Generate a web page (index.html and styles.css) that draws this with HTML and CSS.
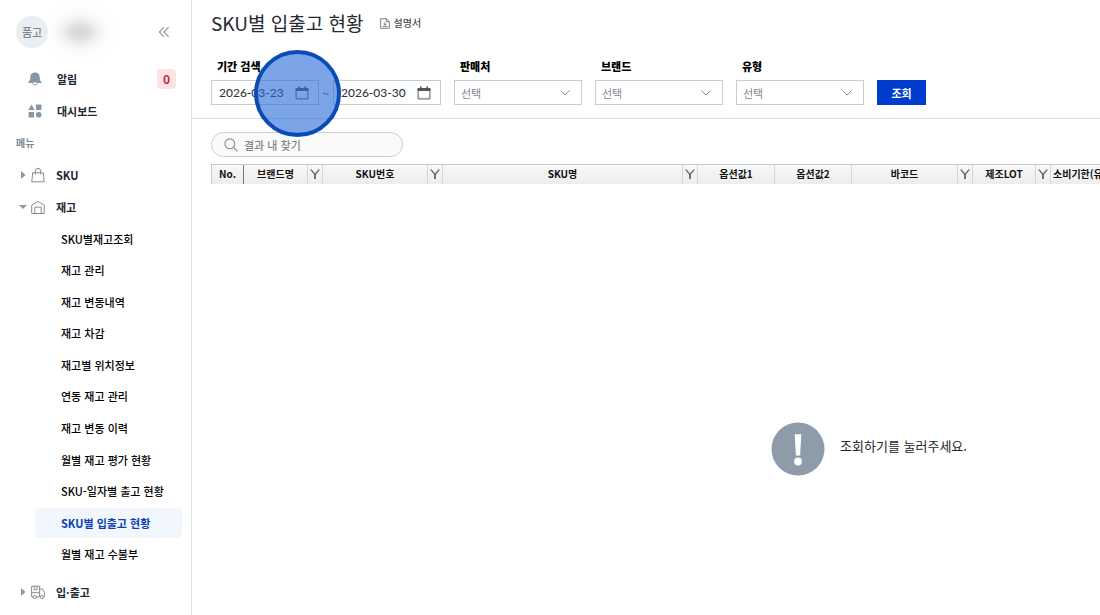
FILE: index.html
```html
<!DOCTYPE html>
<html lang="ko">
<head>
<meta charset="utf-8">
<title>SKU별 입출고 현황</title>
<link rel="stylesheet" href="styles.css">
</head>
<body>
<div class="app">
  <nav class="sidebar">
    <div class="account">
      <span class="avatar">품고</span>
      <span class="account-name"></span>
      <button class="collapse" type="button" aria-label="메뉴 접기">
        <svg width="12" height="12" viewBox="0 0 12 12" fill="none" stroke="#8b95a0" stroke-width="1.1"><path d="M6 1.2 1.3 6 6 10.8M10.6 1.2 5.9 6l4.7 4.8"/></svg>
      </button>
    </div>
    <a class="quick" href="#">
      <svg width="14" height="14" viewBox="0 0 14 14" fill="#8796a5"><path d="M7 .5C4 .5 2.300 2.600 2.300 5.200c0 2.700-.6 3.900-1.900 4.800v.9h13.200V10c-1.300-.9-1.900-2.100-1.900-4.800C11.700 2.600 10 .5 7 .5z"/><path d="M4.700 10.500a2.300 2.600 0 0 0 4.600 0" fill="#fff" stroke="#8796a5" stroke-width=".9"/></svg>
      <span>알림</span>
      <span class="count">0</span>
    </a>
    <a class="quick" href="#">
      <svg width="14" height="14" viewBox="0 0 14 14" fill="#8796a5"><path d="M3.500.6 6.700 6H.3z"/><path d="M8 .6h5.400V6H8zM.6 8H6v5.400H.6z"/><circle cx="10.700" cy="10.700" r="2.800"/></svg>
      <span>대시보드</span>
    </a>
    <p class="section">메뉴</p>
    <a class="group" href="#">
      <svg class="arrow" width="8" height="8" viewBox="0 0 8 8"><path d="M2 0v8l4.500-4z"/></svg>
      <svg class="group-icon" width="14" height="16" viewBox="0 0 14 16"><path d="M1.700 5.800h10.600l.9 9H.8zM4.300 7.500V4a2.700 2.700 0 0 1 5.400 0v3.500"/></svg>
      <span>SKU</span>
    </a>
    <a class="group" href="#">
      <svg class="arrow" width="8" height="8" viewBox="0 0 8 8"><path d="M0 2h8L4 6z"/></svg>
      <svg class="group-icon" width="14" height="16" viewBox="0 0 14 16"><path d="M.7 6.200 7 2.500l6.300 3.700v8.300H.7zM3.800 14.500V8.200h6.400v6.300"/></svg>
      <span>재고</span>
    </a>
    <ul class="submenu">
      <li><a href="#">SKU별재고조회</a></li>
      <li><a href="#">재고 관리</a></li>
      <li><a href="#">재고 변동내역</a></li>
      <li><a href="#">재고 차감</a></li>
      <li><a href="#">재고별 위치정보</a></li>
      <li><a href="#">연동 재고 관리</a></li>
      <li><a href="#">재고 변동 이력</a></li>
      <li><a href="#">월별 재고 평가 현황</a></li>
      <li><a href="#">SKU-일자별 출고 현황</a></li>
      <li><a class="active" href="#" aria-current="page">SKU별 입출고 현황</a></li>
      <li><a href="#">월별 재고 수불부</a></li>
    </ul>
    <a class="group last" href="#">
      <svg class="arrow" width="8" height="8" viewBox="0 0 8 8"><path d="M2 0v8l4.500-4z"/></svg>
      <svg class="group-icon" width="14" height="16" viewBox="0 0 14 16"><path d="M2.300 12.800H.6V2.200h8v10.600H5.300M3.200 2.200v3.600h2.800V2.200M8.600 5h2.800l2 3.300v4.500h-1.100M8.600 8.700H.6"/><circle cx="3.800" cy="13" r="1.600"/><circle cx="10.800" cy="13" r="1.600"/></svg>
      <span>입·출고</span>
    </a>
  </nav>

  <main class="main">
    <header class="heading">
      <h1>SKU별 입출고 현황</h1>
      <a class="guide" href="#">
        <svg width="10" height="11" viewBox="0 0 10 11" fill="none" stroke="#6b7176" stroke-width=".9"><path d="M.6.700h5.800l2.900 2.800v6.800H.6zM6.200.7v3h3M2.600 8.400h4.800M4.900 4.300v2.700M3.500 5.900l1.400 1.200 1.400-1.200"/></svg>
        설명서
      </a>
    </header>

    <form class="filters">
      <div class="field">
        <label for="from">기간 검색</label>
        <div class="range">
          <span class="control date">
            <input id="from" type="text" value="2026-03-23">
            <svg width="14" height="14" viewBox="0 0 14 14"><path class="cal" d="M1.100 2.600h11.800v10.300H1.100z"/><path class="cal-top" d="M.6 2.200h12.800v2.900H.6zM3 .5h1.600v2H3zM9.400.5H11v2H9.400z"/></svg>
          </span>
          <span class="tilde">~</span>
          <span class="control date">
            <input type="text" value="2026-03-30" aria-label="종료일">
            <svg width="14" height="14" viewBox="0 0 14 14"><path class="cal" d="M1.100 2.600h11.800v10.300H1.100z"/><path class="cal-top" d="M.6 2.200h12.800v2.900H.6zM3 .5h1.600v2H3zM9.400.5H11v2H9.400z"/></svg>
          </span>
          <span class="pointer"></span>
        </div>
      </div>
      <div class="field">
        <label for="seller">판매처</label>
        <span class="control pick">
          <select id="seller"><option>선택</option></select>
          <svg width="10" height="6" viewBox="0 0 10 6"><path d="m.5.5 4.500 4.500L9.500.5"/></svg>
        </span>
      </div>
      <div class="field">
        <label for="brand">브랜드</label>
        <span class="control pick">
          <select id="brand"><option>선택</option></select>
          <svg width="10" height="6" viewBox="0 0 10 6"><path d="m.5.5 4.500 4.500L9.500.5"/></svg>
        </span>
      </div>
      <div class="field">
        <label for="kind">유형</label>
        <span class="control pick">
          <select id="kind"><option>선택</option></select>
          <svg width="10" height="6" viewBox="0 0 10 6"><path d="m.5.5 4.500 4.500L9.500.5"/></svg>
        </span>
      </div>
      <button class="submit" type="button">조회</button>
    </form>

    <section class="results">
      <div class="search">
        <svg width="14" height="14" viewBox="0 0 14 14" fill="none" stroke="#858e96" stroke-width="1.100"><circle cx="5.800" cy="5.800" r="4.900"/><path d="m9.400 9.400 4 4"/></svg>
        <input type="text" placeholder="결과 내 찾기" aria-label="결과 내 찾기">
      </div>
      <table class="grid">
        <colgroup>
          <col class="c-no"><col class="c-brand"><col class="c-filter"><col class="c-code"><col class="c-filter"><col class="c-name"><col class="c-filter"><col class="c-opt"><col class="c-opt"><col class="c-barcode"><col class="c-filter"><col class="c-lot"><col class="c-filter"><col class="c-expiry">
        </colgroup>
        <thead>
          <tr>
            <th class="fixed">No.</th>
            <th>브랜드명</th>
            <th><button type="button" aria-label="브랜드명 필터"><svg width="10" height="10" viewBox="0 0 10 10"><path d="M0 .5h1.600L5 4.600 8.400.5H10L5.900 5.400V10H4.100V5.400z"/></svg></button></th>
            <th>SKU번호</th>
            <th><button type="button" aria-label="SKU번호 필터"><svg width="10" height="10" viewBox="0 0 10 10"><path d="M0 .5h1.600L5 4.600 8.400.5H10L5.900 5.400V10H4.100V5.400z"/></svg></button></th>
            <th>SKU명</th>
            <th><button type="button" aria-label="SKU명 필터"><svg width="10" height="10" viewBox="0 0 10 10"><path d="M0 .5h1.600L5 4.600 8.400.5H10L5.900 5.400V10H4.100V5.400z"/></svg></button></th>
            <th>옵션값1</th>
            <th>옵션값2</th>
            <th>바코드</th>
            <th><button type="button" aria-label="바코드 필터"><svg width="10" height="10" viewBox="0 0 10 10"><path d="M0 .5h1.600L5 4.600 8.400.5H10L5.900 5.400V10H4.100V5.400z"/></svg></button></th>
            <th>제조LOT</th>
            <th><button type="button" aria-label="제조LOT 필터"><svg width="10" height="10" viewBox="0 0 10 10"><path d="M0 .5h1.600L5 4.600 8.400.5H10L5.900 5.400V10H4.100V5.400z"/></svg></button></th>
            <th class="start">소비기한(유</th>
          </tr>
        </thead>
      </table>
      <div class="empty">
        <svg width="54" height="54" viewBox="0 0 54 54"><circle cx="27" cy="27" r="26.500" fill="#8e9ba8"/><path d="M23.700 12.200h6.600l-1.200 21.400h-4.200z" fill="#fff"/><circle cx="27" cy="39.500" r="3.900" fill="#fff"/></svg>
        <p>조회하기를 눌러주세요.</p>
      </div>
    </section>
  </main>
</div>
</body>
</html>
```
FILE: styles.css
```css
* { box-sizing: border-box; }

body {
  margin: 0;
  overflow: hidden;
  background: #fff;
  color: #22272b;
  font-family: "Noto Sans CJK KR", "Noto Sans", sans-serif;
  font-size: 11px;
  line-height: 16px;
}

a { color: inherit; text-decoration: none; }
button, input, select { font: inherit; color: inherit; }
button { padding: 0; border: 0; background: none; }
svg { flex: none; }
p, h1, ul { margin: 0; padding: 0; }

.app {
  display: grid;
  grid-template-columns: 192px minmax(0, 1fr);
  height: 100vh;
}

/* Sidebar */
.sidebar {
  padding: 16px 0 0;
  border-right: 1px solid #dfe2e5;
  overflow: hidden;
}

.account {
  display: flex;
  align-items: center;
  padding: 0 21px 0 16px;
  margin-bottom: 15px;
}

.avatar {
  width: 32px;
  line-height: 32px;
  border-radius: 50%;
  background: #e9eef2;
  color: #7c8791;
  font-weight: 500;
  text-align: center;
}

.account-name {
  width: 36px;
  height: 20px;
  margin-left: 14px;
  border-radius: 50%;
  background: #ccc;
  filter: blur(8px);
}

.collapse { display: flex; margin-left: auto; }

.quick, .group {
  display: flex;
  align-items: center;
  height: 32px;
  font-weight: 700;
}

.quick { gap: 15px; padding: 0 15px 0 28px; }

.count {
  width: 19px;
  margin-left: auto;
  border-radius: 4px;
  background: #fbe3e3;
  color: #b82a42;
  font-size: 12px;
  line-height: 20px;
  text-align: center;
}

.section {
  padding-left: 16px;
  color: #7c8893;
  font-size: 10px;
  font-weight: 700;
  line-height: 32px;
}

.group { padding-left: 19px; }
.arrow { margin-right: 4px; fill: #8e959b; }
.group-icon { margin-right: 11px; fill: none; stroke: #858d94; }

.submenu {
  display: grid;
  grid-auto-rows: 1fr;
  align-items: center;
  min-height: 347px;
  padding: 0 9px 0 35px;
  list-style: none;
}

.submenu a {
  display: block;
  padding-left: 26px;
  border-radius: 4px;
  color: #000;
  font-weight: 500;
  line-height: 30px;
}

.submenu .active { background: #f2f7fd; color: #0b3fb5; font-weight: 700; }
.last { margin-top: 6px; }

/* Page heading and filters */
.main { display: flex; flex-direction: column; min-width: 0; }

.heading {
  display: flex;
  align-items: center;
  gap: 16px;
  padding: 7px 19px 0;
}

h1 { color: #25292d; font-size: 19px; font-weight: 400; line-height: 32px; }

.guide {
  display: flex;
  align-items: center;
  gap: 4px;
  color: #454a50;
  font-size: 10px;
  font-weight: 500;
}

.filters {
  display: flex;
  align-items: flex-end;
  gap: 13px;
  padding: 19px 19px 13px;
  border-bottom: 1px solid #dcdfe1;
}

.field label {
  display: block;
  margin-bottom: 6px;
  padding-left: 6px;
  color: #000;
  font-weight: 900;
}

.range { position: relative; display: flex; align-items: center; }
.tilde { width: 14px; text-align: center; }

.control {
  display: grid;
  grid-template-columns: minmax(0, 1fr);
  align-items: center;
  height: 25px;
  border: 1px solid #c9cdd0;
  background: #fff;
}

.control > * { grid-area: 1 / 1; }
.control svg { justify-self: end; pointer-events: none; }
.control input, .control select {
  width: 100%;
  height: 23px;
  padding: 0 7px;
  border: 0;
  outline: 0;
  background: none;
  appearance: none;
}

.date {
  width: 108px;
  color: #33373a;
  font-family: Lato, "Noto Sans CJK KR", sans-serif;
  font-size: 12px;
  font-weight: 500;
}

.date svg { margin-right: 9px; }
.cal { fill: none; stroke: #555; }
.cal-top { fill: #555; }

.pick { width: 128px; color: #80888f; }
.pick select { padding: 0 6px; }
.pick svg { margin-right: 11px; fill: none; stroke: #858d93; }

.pointer {
  position: absolute;
  top: -30px;
  left: 43px;
  width: 87px;
  height: 87px;
  border: 4px solid #0a4bb8;
  border-radius: 50%;
  background: rgba(37, 104, 217, 0.6);
}

.submit {
  width: 49px;
  height: 25px;
  background: #003cce;
  color: #fff;
  font-weight: 700;
}

/* Results */
.results {
  display: flex;
  flex: 1;
  flex-direction: column;
  padding: 13px 0 0 19px;
  overflow: hidden;
}

.search {
  display: flex;
  align-items: center;
  gap: 6px;
  width: 192px;
  height: 25px;
  padding: 0 12px;
  border: 1px solid #cbcfd1;
  border-radius: 13px;
  background: #fafafa;
}

.search input {
  width: 100%;
  padding: 0;
  border: 0;
  outline: 0;
  background: none;
}

.search input::placeholder { color: #7f878e; font-weight: 500; opacity: 1; }

.grid {
  width: 970px;
  margin-top: 7px;
  border-collapse: separate;
  border-spacing: 0;
  border-top: 1px solid #c6c8ca;
  border-left: 1px solid #c6c8ca;
  table-layout: fixed;
}

.grid th {
  padding: 0 0 1px;
  border-right: 1px solid #d5d7d9;
  background: linear-gradient(#f8f8f8, #ededed);
  color: #111;
  font-size: 10px;
  font-weight: 700;
  line-height: 18px;
  white-space: nowrap;
}

.grid th.fixed { border-right-color: #777; }
.grid th.start { padding-left: 2px; text-align: left; }
.grid button { display: flex; margin: 0 auto; fill: #5d6166; }

.c-no { width: 32px; }
.c-brand { width: 64px; }
.c-filter { width: 15px; }
.c-code { width: 105px; }
.c-name { width: 240px; }
.c-opt { width: 77px; }
.c-barcode { width: 106px; }
.c-lot { width: 63px; }
.c-expiry { width: 131px; }

.empty {
  display: flex;
  flex: 1;
  align-items: center;
  align-self: center;
  gap: 15px;
  padding: 98px 0 0 427px;
  font-size: 13px;
}

.empty p { padding-bottom: 5px; }
```
